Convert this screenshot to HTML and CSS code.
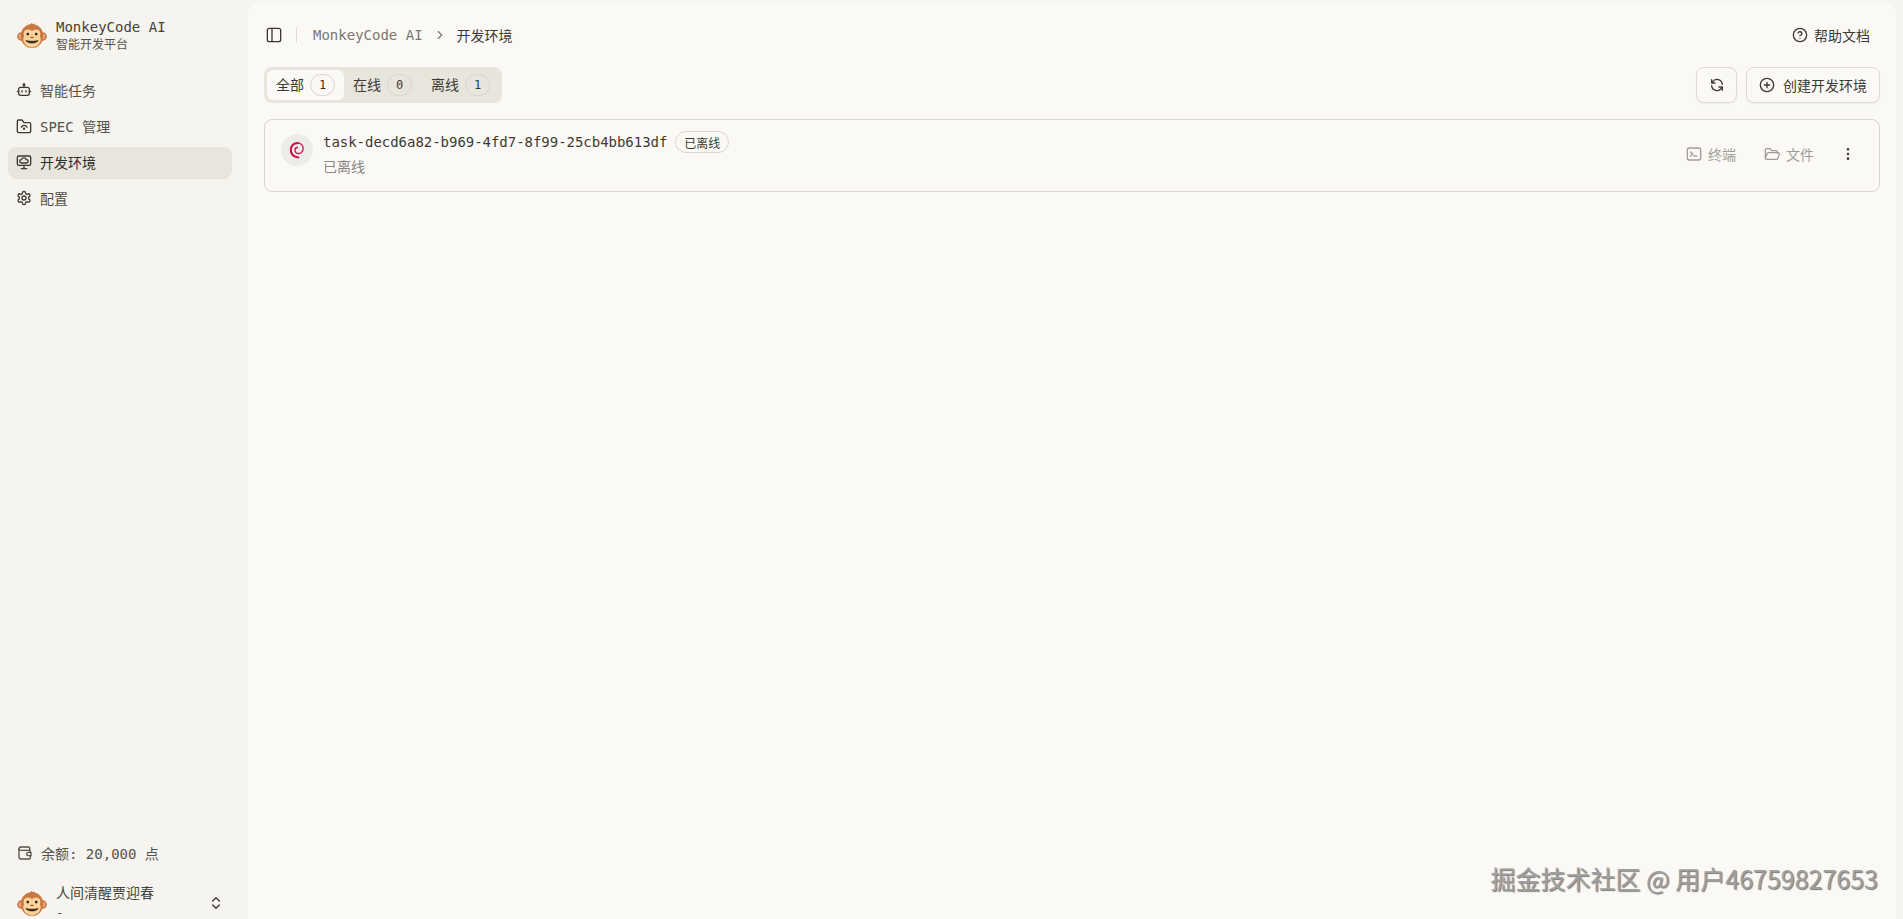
FILE: index.html
```html
<!DOCTYPE html>
<html lang="zh-CN">
<head>
  <meta charset="UTF-8" />
  <meta name="viewport" content="width=device-width, initial-scale=1.0"/>
  <title>MonkeyCode AI</title>
  <link rel="stylesheet" href="styles.css">
</head>
<body>

  <svg class="defs" width="0" height="0">
    <symbol id="monkey" viewBox="0 0 32 28">
      <circle cx="4.800" cy="15" r="4.600" fill="#c9793f"/>
      <circle cx="27.200" cy="15" r="4.600" fill="#c9793f"/>
      <circle cx="4.800" cy="15" r="2.900" fill="#f0a58e"/>
      <circle cx="27.200" cy="15" r="2.900" fill="#f0a58e"/>
      <path d="M14 3 15.500 .6 16.500 2 18 .8 18 3.500z" fill="#a9602c"/>
      <ellipse cx="16" cy="14.500" rx="12" ry="12.800" fill="#c9793f"/>
      <path d="M16 9.500c1.500-2.500 7-3 8.500 .5 1 2.500-.5 4.500 .5 6.500 1.500 5-3.500 10-9 10s-10.500-5-9-10c1-2-.5-4 .5-6.500 1.500-3.500 7-3 8.500-.5z" fill="#f8d49c"/>
      <circle cx="11.500" cy="12.500" r="1.500" fill="#3a2414"/>
      <circle cx="20.500" cy="12.500" r="1.500" fill="#3a2414"/>
      <path d="M14.800 16h2.400" stroke="#9a5a2a" stroke-width="1.200" stroke-linecap="round"/>
      <path d="M9.500 19.500c3 3.200 10 3.200 13 0-3 1-10 1-13 0z" fill="#3a2414" stroke="#3a2414" stroke-linejoin="round"/>
    </symbol>
  </svg>

  <div class="app">
    <aside class="sidebar">
      <div class="brand">
        <svg class="logo"><use href="#monkey"/></svg>
        <div>
          <div class="brand-name">MonkeyCode AI</div>
          <div class="brand-sub">智能开发平台</div>
        </div>
      </div>

      <nav class="nav">
        <a class="nav-item">
          <svg class="icon" viewBox="0 0 24 24"><path d="M12 8V5"/><circle cx="12" cy="4" r="1.200"/><rect x="4" y="8" width="16" height="12" rx="3"/><path d="M2 14h2M20 14h2M9 13v2M15 13v2"/></svg>
          智能任务
        </a>
        <a class="nav-item">
          <svg class="icon" viewBox="0 0 24 24"><path d="M2 18V5a2 2 0 0 1 2-2h5l3 4h8a2 2 0 0 1 2 2v11a2 2 0 0 1-2 2H4a2 2 0 0 1-2-2z"/><path d="M8 14a4.500 4.500 0 0 1 8.500 0"/><circle cx="12" cy="16" r=".8"/></svg>
          SPEC 管理
        </a>
        <a class="nav-item active">
          <svg class="icon" viewBox="0 0 24 24"><rect x="2" y="3" width="20" height="14" rx="2"/><path d="M12 17v5M8 22h8"/><path d="M8 13.500a2.500 2.500 0 0 1 0-5 4 4 0 0 1 7.500 0 2.500 2.500 0 0 1 .5 5z"/></svg>
          开发环境
        </a>
        <a class="nav-item">
          <svg class="icon" viewBox="0 0 24 24"><path d="M12.220 2h-.44a2 2 0 0 0-2 2v.18a2 2 0 0 1-1 1.730l-.43.25a2 2 0 0 1-2 0l-.15-.08a2 2 0 0 0-2.730.73l-.22.38a2 2 0 0 0 .73 2.730l.15.1a2 2 0 0 1 1 1.720v.51a2 2 0 0 1-1 1.740l-.15.09a2 2 0 0 0-.73 2.730l.22.38a2 2 0 0 0 2.730.73l.15-.08a2 2 0 0 1 2 0l.43.25a2 2 0 0 1 1 1.730V20a2 2 0 0 0 2 2h.44a2 2 0 0 0 2-2v-.18a2 2 0 0 1 1-1.730l.43-.25a2 2 0 0 1 2 0l.15.08a2 2 0 0 0 2.730-.73l.22-.39a2 2 0 0 0-.73-2.730l-.15-.08a2 2 0 0 1-1-1.740v-.5a2 2 0 0 1 1-1.740l.15-.09a2 2 0 0 0 .73-2.730l-.22-.38a2 2 0 0 0-2.730-.73l-.15.08a2 2 0 0 1-2 0l-.43-.25a2 2 0 0 1-1-1.730V4a2 2 0 0 0-2-2z"/><circle cx="12" cy="12" r="3"/></svg>
          配置
        </a>
      </nav>

      <div class="sidebar-foot">
        <div class="balance">
          <svg class="icon" viewBox="0 0 24 24"><path d="M19 8V5a2 2 0 0 0-2-2H6a3 3 0 0 0-3 3v12a3 3 0 0 0 3 3h12a2 2 0 0 0 2-2v-3"/><path d="M3 6a3 3 0 0 0 3 2h12a2 2 0 0 1 2 2v1"/><path d="M21 11v5h-4a2.500 2.500 0 0 1 0-5z"/></svg>
          余额: 20,000 点
        </div>
        <div class="user">
          <svg class="logo"><use href="#monkey"/></svg>
          <div class="user-text">
            <div class="user-name">人间清醒贾迎春</div>
            <div class="user-sub">-</div>
          </div>
          <svg class="icon" viewBox="0 0 24 24"><path d="m7 9 5-5 5 5M17 15l-5 5-5-5"/></svg>
        </div>
      </div>
    </aside>

    <main class="panel">
      <header class="topbar">
        <svg class="icon" viewBox="0 0 24 24"><rect x="2" y="2" width="20" height="20" rx="3"/><path d="M9 2v20"/></svg>
        <span class="divider"></span>
        <span class="crumb">MonkeyCode AI</span>
        <svg class="icon crumb-sep" viewBox="0 0 24 24"><path d="m9 6 6 6-6 6"/></svg>
        <span class="crumb-now">开发环境</span>
        <a class="help">
          <svg class="icon" viewBox="0 0 24 24"><circle cx="12" cy="12" r="10"/><path d="M9.100 9a3 3 0 0 1 5.800 1c0 2-3 3-3 3M12 17h.01"/></svg>
          帮助文档
        </a>
      </header>

      <div class="toolbar">
        <div class="tabs">
          <div class="tab selected">全部 <span class="count">1</span></div>
          <div class="tab">在线 <span class="count">0</span></div>
          <div class="tab">离线 <span class="count">1</span></div>
        </div>
        <div class="actions">
          <button class="btn btn-icon">
            <svg class="icon" viewBox="0 0 24 24"><path d="M20 11A8 8 0 0 0 5.500 7L4 9M4 4v5h5M4 13a8 8 0 0 0 14.500 4l1.500-2M20 20v-5h-5"/></svg>
          </button>
          <button class="btn">
            <svg class="icon" viewBox="0 0 24 24"><circle cx="12" cy="12" r="10"/><path d="M8 12h8M12 8v8"/></svg>
            创建开发环境
          </button>
        </div>
      </div>

      <section class="card">
        <div class="distro">
          <svg viewBox="0 0 16 18" width="16" height="18" fill="none" stroke="#c9124f" stroke-linecap="round">
            <path d="M8.500 2C4.500 2 1.800 5 1.800 9c0 4 3 6.800 7.500 7.500" stroke-width="2"/>
            <path d="M8.500 2c3.500 0 5.700 2.500 5.700 5.500 0 3-2.300 5-4.700 5-2 0-3.500-1.500-3.500-3.500 0-1.500 1-2.500 2.500-2.500" stroke-width="1.300"/>
          </svg>
        </div>
        <div class="card-body">
          <div class="card-title">
            <span class="task-name">task-decd6a82-b969-4fd7-8f99-25cb4bb613df</span>
            <span class="status">已离线</span>
          </div>
          <div class="card-sub">已离线</div>
        </div>
        <div class="card-actions">
          <span class="card-action">
            <svg class="icon" viewBox="0 0 24 24"><rect x="2" y="3" width="20" height="18" rx="3"/><path d="m7 9 3 3-3 3M12 15h4"/></svg>
            终端
          </span>
          <span class="card-action">
            <svg class="icon" viewBox="0 0 24 24"><path d="M2 18V6a2 2 0 0 1 2-2h5l2.500 3H18a2 2 0 0 1 2 2v2"/><path d="M2 18l2.500-6.500A2 2 0 0 1 6.400 10H21a2 2 0 0 1 1.900 2.600L21 18a2 2 0 0 1-2 2H4a2 2 0 0 1-2-2z"/></svg>
            文件
          </span>
          <svg class="icon more" viewBox="0 0 24 24"><circle cx="12" cy="5" r="1"/><circle cx="12" cy="12" r="1"/><circle cx="12" cy="19" r="1"/></svg>
        </div>
      </section>

      <div class="watermark">掘金技术社区 @ 用户46759827653</div>
    </main>
  </div>

</body>
</html>
```

FILE: styles.css
```css
html, body {
  margin: 0;
  height: 100%;
  overflow: hidden;
}

body {
  font-family: "DejaVu Sans Mono", "Noto Sans CJK SC", monospace;
  font-size: 14px;
  color: #3d3a34;
  background: #f6f4ef;
}

.defs {
  display: none;
}

.app {
  display: flex;
  height: 925px;
}

.icon {
  width: 16px;
  height: 16px;
  flex: none;
  fill: none;
  stroke: currentColor;
  stroke-width: 2;
  stroke-linecap: round;
  stroke-linejoin: round;
}

.sidebar {
  width: 248px;
  flex: none;
  display: flex;
  flex-direction: column;
  padding: 0 16px 0 8px;
  box-sizing: border-box;
}

.brand {
  display: flex;
  align-items: center;
  gap: 9px;
  padding: 17px 9px 0;
  height: 54px;
  box-sizing: border-box;
  line-height: 18px;
}

.logo {
  width: 30px;
  height: 27px;
  flex: none;
}

.brand-name {
  color: #45423c;
}

.brand-sub {
  font-size: 12px;
  color: #55524b;
}

.nav {
  display: flex;
  flex-direction: column;
  gap: 4px;
  margin-top: 21px;
}

.nav-item {
  display: flex;
  align-items: center;
  gap: 8px;
  height: 32px;
  padding: 0 8px 2px;
  box-sizing: border-box;
  border-radius: 8px;
  color: #55524b;
}

.nav-item .icon {
  stroke: #3d3a34;
}

.nav-item.active {
  background: #e8e6dc;
  color: #2f2d28;
}

.sidebar-foot {
  margin-top: auto;
}

.balance {
  display: flex;
  align-items: center;
  gap: 8px;
  padding: 0 9px;
  height: 20px;
  color: #55524b;
}

.user {
  display: flex;
  align-items: center;
  gap: 9px;
  padding: 0 8px 0 9px;
  margin-top: 18px;
  height: 44px;
}

.user-text {
  flex: 1;
  line-height: 20px;
}

.user-name {
  color: #45423c;
}

.user-sub {
  font-size: 12px;
  color: #55524b;
}

.panel {
  position: relative;
  flex: 1;
  margin: 3px 7px 0 0;
  padding: 0 16px;
  background: #fbf9f6;
  border-radius: 12px 12px 0 0;
}

.topbar {
  display: flex;
  align-items: center;
  height: 64px;
  padding: 0 2px;
  box-sizing: border-box;
}

.divider {
  width: 1px;
  height: 16px;
  margin: 0 16px 0 14px;
  background: #dedbd2;
}

.crumb {
  color: #7b7870;
}

.crumb-sep {
  width: 14px;
  height: 14px;
  margin: 0 10px;
  color: #7b7870;
}

.crumb-now {
  color: #3d3a34;
}

.help {
  display: flex;
  align-items: center;
  gap: 6px;
  margin-left: auto;
  padding-right: 8px;
}

.toolbar {
  display: flex;
  justify-content: space-between;
  align-items: center;
  height: 36px;
}

.tabs {
  display: flex;
  height: 36px;
  padding: 3px;
  box-sizing: border-box;
  background: #e8e6dc;
  border-radius: 8px;
}

.tab {
  display: flex;
  align-items: center;
  gap: 6px;
  padding: 0 9px 2px;
  border-radius: 6px;
}

.tab.selected {
  background: #fbf9f6;
}

.tab:nth-child(2) {
  padding-right: 10px;
}

.count {
  display: flex;
  align-items: center;
  justify-content: center;
  width: 25px;
  height: 22px;
  margin-top: 2px;
  font-size: 12px;
  border: 1px solid #d9d6cd;
  border-radius: 11px;
  box-sizing: border-box;
}

.actions {
  display: flex;
  gap: 9px;
}

.btn {
  display: flex;
  align-items: center;
  justify-content: center;
  gap: 8px;
  height: 36px;
  padding: 0 12px;
  font: inherit;
  color: inherit;
  background: #fbf9f6;
  border: 1px solid #dedbd2;
  border-radius: 8px;
  box-shadow: 0 1px 2px rgba(0, 0, 0, 0.05);
}

.btn-icon {
  width: 41px;
  padding: 0;
}

.card {
  display: flex;
  align-items: flex-start;
  height: 73px;
  margin-top: 16px;
  padding: 14px 16px 0;
  box-sizing: border-box;
  border: 1px solid #d9d6cd;
  border-radius: 8px;
}

.distro {
  display: flex;
  align-items: center;
  justify-content: center;
  width: 32px;
  height: 32px;
  margin-right: 10px;
  background: #eeece6;
  border-radius: 50%;
}

.card-body {
  flex: 1;
  margin-top: -3px;
}

.card-title {
  display: flex;
  align-items: center;
  gap: 8px;
}

.task-name {
  letter-spacing: -0.03px;
}

.status {
  display: flex;
  align-items: center;
  height: 22px;
  padding: 0 8px;
  font-size: 12px;
  border: 1px solid #d9d6cd;
  border-radius: 11px;
  box-sizing: border-box;
}

.card-sub {
  margin-top: 3px;
  color: #8a877f;
}

.card-actions {
  display: flex;
  align-items: center;
  margin-top: 10px;
  color: #a09d95;
}

.card-action {
  display: flex;
  align-items: center;
  gap: 6px;
  margin-right: 28px;
}

.more {
  color: #3d3a34;
  margin: 0 7px 0 -2px;
}

.watermark {
  position: absolute;
  right: 18px;
  bottom: 29px;
  font-family: "Noto Sans CJK SC", sans-serif;
  font-size: 25px;
  color: #a0a0a0;
  text-shadow: 1px 1px 1px #777;
}
```
